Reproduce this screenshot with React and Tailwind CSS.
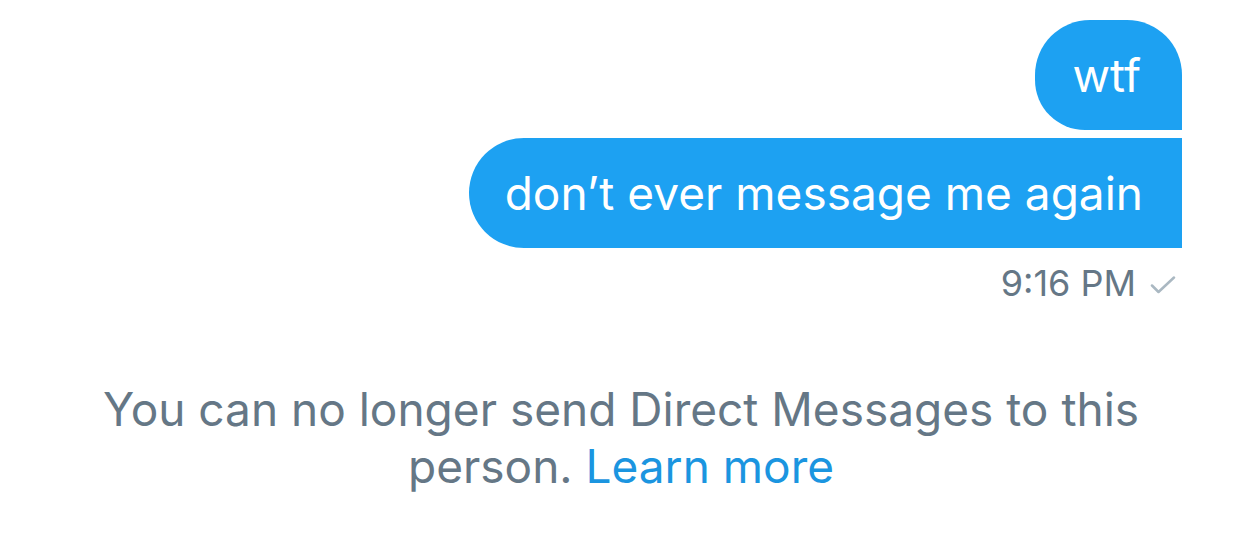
export default function App() {
  return (
    <div className="min-h-screen w-full bg-white" style={{ fontFamily: "Inter, 'Noto Sans', sans-serif" }}>
      <div className="flex flex-col items-end pr-[60px] pt-[20px]">
        <div className="flex h-[110px] items-center rounded-tl-[55px] rounded-tr-[55px] rounded-bl-[50px] bg-[#1da1f2] pl-[37px] pr-[41px] text-[46px] text-white">
          wtf
        </div>
        <div className="mt-[8px] flex h-[110px] items-center rounded-l-[55px] bg-[#1da1f2] pl-[36px] pr-[39px] text-[46px] text-white">
          don’t ever message me again
        </div>
        <div className="mt-[8px] flex items-center gap-[14px] pr-[6px] text-[36px] text-[#657786]">
          <span>9:16 PM</span>
          <svg width="26" height="18" viewBox="0 0 26 18" fill="none" stroke="#aab8c2" strokeWidth="2.5" strokeLinecap="round" strokeLinejoin="round" className="mt-[4px]">
            <path d="M2 9.5 L8.5 16 L24 1.5" />
          </svg>
        </div>
      </div>
      <div className="mt-[71px] flex flex-col items-center text-[46px] leading-[57px] text-[#657786]">
        <p>You can no longer send Direct Messages to this</p>
        <p>
          person. <span className="text-[#1b95e0]">Learn more</span>
        </p>
      </div>
    </div>
  )
}
